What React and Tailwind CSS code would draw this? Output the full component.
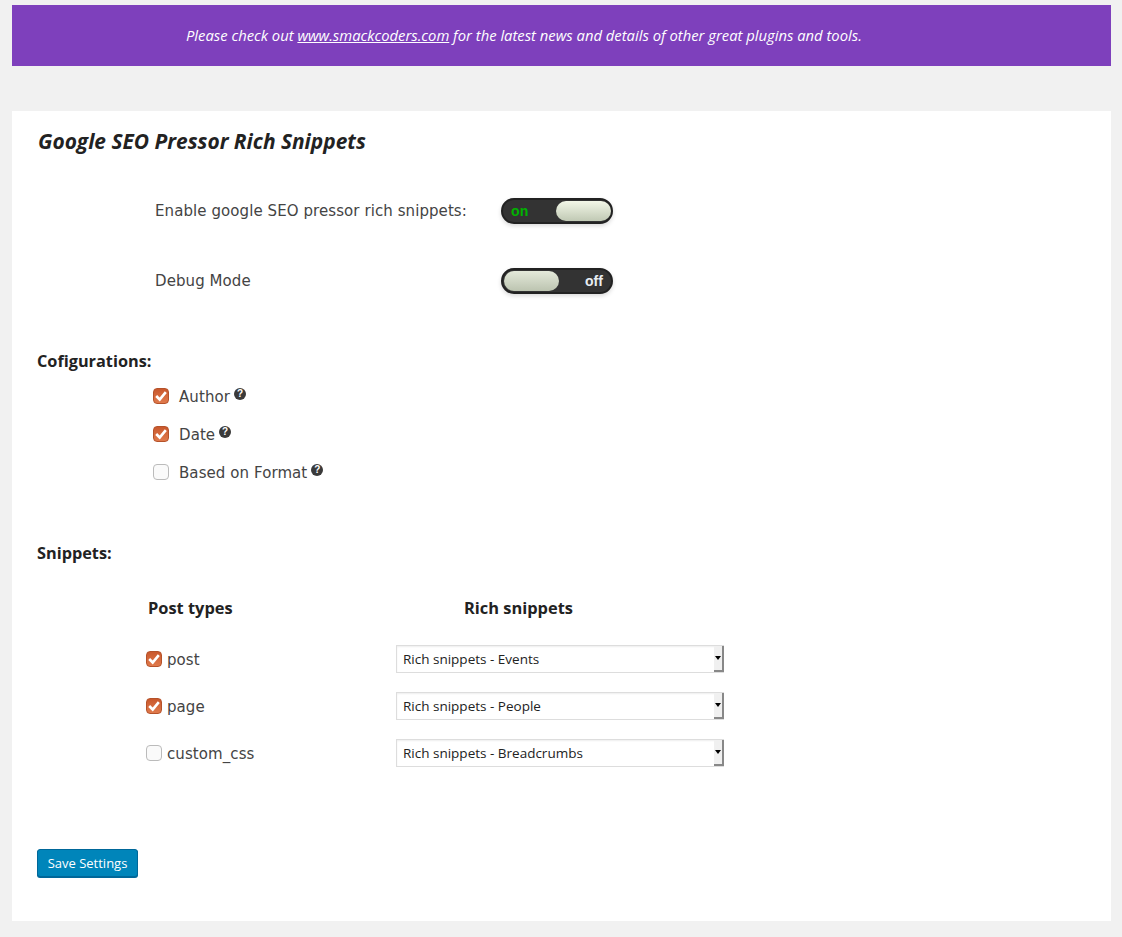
import { useState } from 'react';

const ubuntu = "font-['Open_Sans','Noto_Sans',sans-serif]";
const dejavu = "font-['DejaVu_Sans',sans-serif]";

function Toggle({ on }) {
  return (
    <div className={`flex h-[26px] w-[112px] items-center rounded-[13px] border-2 border-[#222] bg-[#333] pl-[1px] shadow-[0_2px_4px_rgba(0,0,0,0.15)] font-['Liberation_Sans',sans-serif] text-sm font-bold ${on ? 'justify-between' : 'flex-row-reverse justify-between'}`}>
      <span className={on ? 'pl-[7px] text-[#00b300]' : 'pr-2 text-[#e8edf2]'}>{on ? 'on' : 'off'}</span>
      <span className={`h-5 w-[55px] rounded-[10px] bg-gradient-to-b ${on ? 'from-[#f3f7e8] to-[#c0c9b4]' : 'from-[#e4e9da] to-[#bcc4b0]'}`} />
    </div>
  );
}

function Check({ checked }) {
  return (
    <span className={`flex h-4 w-4 shrink-0 items-center justify-center rounded-[4px] border ${checked ? 'border-[#b5522a] bg-gradient-to-b from-[#c9582c] to-[#e07a4c]' : 'border-[#bbb] bg-[#fafafa]'}`}>
      {checked && (
        <svg viewBox="0 0 16 16" className="h-[14px] w-[14px]" fill="none" stroke="#fff" strokeWidth="3">
          <path d="M2.5 8 L6.5 12 L13.5 3.5" />
        </svg>
      )}
    </span>
  );
}

function Help() {
  return (
    <span className="mb-1 ml-1 flex h-3 w-3 items-center justify-center rounded-full bg-[#3a3a3a] font-['Liberation_Sans',sans-serif] text-[10px] font-bold leading-none text-white">?</span>
  );
}

function SnippetRow({ name, checked, value, options }) {
  const [val, setVal] = useState(value);
  return (
    <div className="flex h-[47px] items-center">
      <div className={`flex w-[250px] items-center gap-[5px] ${dejavu} text-[15px] tracking-[0.08px] text-[#444]`}>
        <Check checked={checked} />
        <span className="pt-1">{name}</span>
      </div>
      <div className="relative h-7 w-[328px]">
        <select
          value={val}
          onChange={(e) => setVal(e.target.value)}
          className={`h-7 w-full appearance-none border border-[#ddd] bg-white pl-[6px] pt-[2px] ${ubuntu} text-[13.5px] text-[#222] shadow-[inset_0_1px_2px_rgba(0,0,0,0.07)]`}
        >
          {options.map((o) => <option key={o}>{o}</option>)}
        </select>
        <span className="pointer-events-none absolute right-0 top-[1px] flex h-[26px] w-[10px] items-center justify-center border-b-2 border-r-2 border-b-[#888] border-r-[#888] bg-[#f0f0f0]">
          <span className="border-x-[3px] border-t-[4px] border-x-transparent border-t-black" />
        </span>
      </div>
    </div>
  );
}

const options = ['Rich snippets - Events', 'Rich snippets - People', 'Rich snippets - Breadcrumbs'];

export default function App() {
  return (
    <div className="min-h-[937px] bg-[#f1f1f1] pl-3 pr-[11px] pt-[5px] pb-4">
      <div className={`flex h-[61px] items-center bg-[#7e40bc] pl-[174px] ${ubuntu} text-[14.8px] italic text-white`}>
        <p>Please check out <a className="underline" href="#">www.smackcoders.com</a> for the latest news and details of other great plugins and tools.</p>
      </div>

      <div className="mt-[45px] h-[810px] bg-white pl-[25px] pt-4 text-[#222]">
        <h1 className={`h-7 pl-[1px] ${ubuntu} text-[20.9px] font-bold italic leading-7`}>Google SEO Pressor Rich Snippets</h1>

        <div className={`mt-[43px] pl-[118px] ${dejavu} text-[15px] tracking-[0.08px] text-[#444]`}>
          <div className="flex h-[26px] items-center">
            <span className="w-[346px]">Enable google SEO pressor rich snippets:</span>
            <Toggle on />
          </div>
          <div className="mt-11 flex h-[26px] items-center">
            <span className="w-[346px]">Debug Mode</span>
            <Toggle on={false} />
          </div>
        </div>

        <h2 className={`mt-[57px] h-5 ${ubuntu} text-[16.3px] font-bold leading-5`}>Cofigurations:</h2>
        <div className={`mt-[6px] pl-[116px] ${dejavu} text-[15px] tracking-[0.08px] text-[#444]`}>
          {[['Author', true], ['Date', true], ['Based on Format', false]].map(([label, checked]) => (
            <div key={label} className="flex h-[38px] items-center">
              <Check checked={checked} />
              <span className="ml-[10px] pt-[2px]">{label}</span>
              <Help />
            </div>
          ))}
        </div>

        <h2 className={`mt-[52px] h-5 ${ubuntu} text-[16.3px] font-bold leading-5`}>Snippets:</h2>

        <div className={`mt-[35px] flex h-5 pl-[111px] ${ubuntu} text-[16.4px] font-bold leading-5`}>
          <span className="w-[316px]">Post types</span>
          <span>Rich snippets</span>
        </div>

        <div className="mt-[17px] pl-[109px]">
          <SnippetRow name="post" checked value={options[0]} options={options} />
          <SnippetRow name="page" checked value={options[1]} options={options} />
          <SnippetRow name="custom_css" checked={false} value={options[2]} options={options} />
        </div>

        <button className={`mt-[73px] h-7 w-[101px] rounded-[3px] border border-[#006799] bg-[#0085ba] pt-[2px] ${ubuntu} text-[13px] text-white shadow-[0_1px_0_#006799]`}>
          Save Settings
        </button>
      </div>
    </div>
  );
}
